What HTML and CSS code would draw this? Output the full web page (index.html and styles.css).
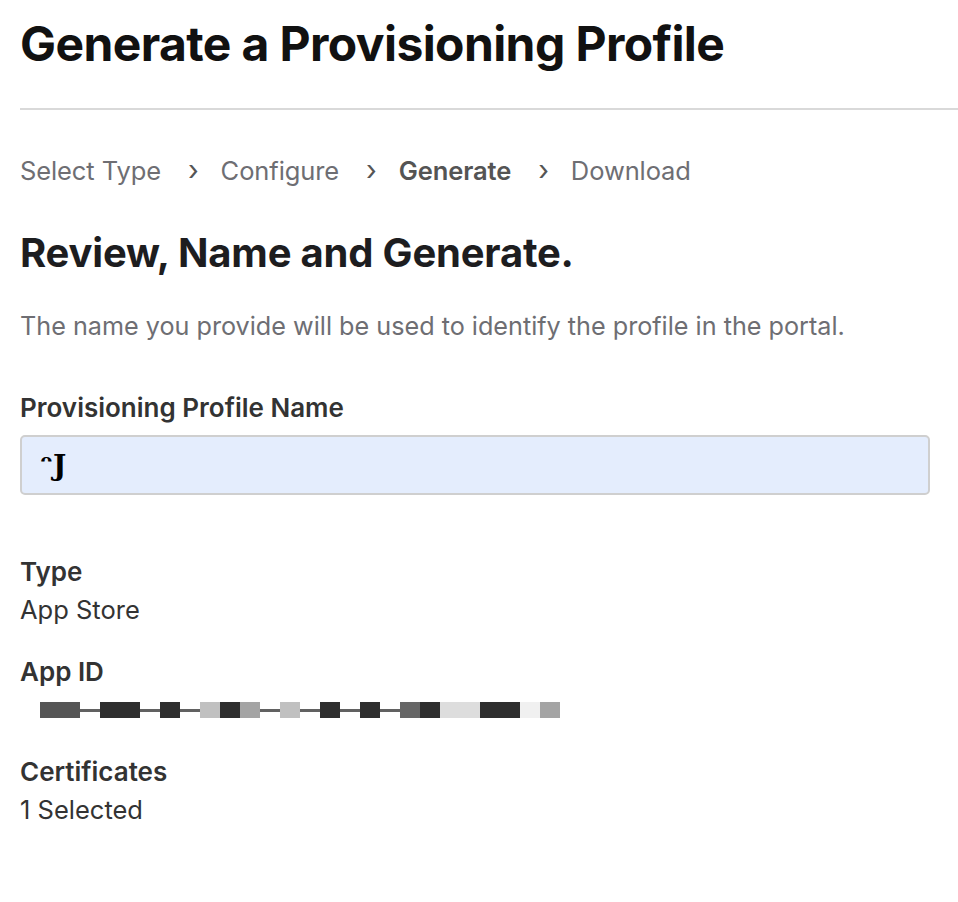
FILE: index.html
```html
<!DOCTYPE html>
<html lang="en">
<head>
<meta charset="utf-8">
<title>Generate a Provisioning Profile</title>
<link rel="stylesheet" href="styles.css">
</head>
<body>
<main class="page">
  <h1 class="title">Generate a Provisioning Profile</h1>
  <hr class="rule">
  <nav class="steps">
    <span class="step">Select Type</span>
    <span class="chev">›</span>
    <span class="step">Configure</span>
    <span class="chev">›</span>
    <span class="step current">Generate</span>
    <span class="chev">›</span>
    <span class="step">Download</span>
  </nav>
  <h2 class="subtitle">Review, Name and Generate.</h2>
  <p class="desc">The name you provide will be used to identify the profile in the portal.</p>
  <label class="label" for="pname">Provisioning Profile Name</label>
  <div class="input" id="pname"><span class="input-text">ᵔJ</span></div>

  <dl class="details">
    <div class="item">
      <dt>Type</dt>
      <dd>App Store</dd>
    </div>
    <div class="item">
      <dt>App ID</dt>
      <dd class="redacted">
        <span class="gap w20"></span><span class="blk w40 c1"></span>
        <span class="ln w20"></span><span class="blk w40 c2"></span>
        <span class="ln w20"></span><span class="blk w20 c2"></span>
        <span class="ln w20"></span><span class="blk w20 c3"></span><span class="blk w20 c2"></span><span class="blk w20 c4"></span>
        <span class="ln w20"></span><span class="blk w20 c3"></span>
        <span class="ln w20"></span><span class="blk w20 c2"></span>
        <span class="ln w20"></span><span class="blk w20 c2"></span>
        <span class="ln w20"></span><span class="blk w20 c5"></span><span class="blk w20 c2"></span><span class="blk w40 c6"></span><span class="blk w40 c2"></span><span class="blk w20 c7"></span><span class="blk w20 c4"></span>
      </dd>
    </div>
    <div class="item">
      <dt>Certificates</dt>
      <dd>1 Selected</dd>
    </div>
  </dl>
</main>
</body>
</html>
```
FILE: styles.css
```css
html, body {
  margin: 0;
  padding: 0;
  background: #ffffff;
}
body {
  font-family: Inter, "Noto Sans", "Liberation Sans", sans-serif;
  color: #1d1d1f;
}
.page {
  padding: 0 0 0 20px;
}
.title {
  margin: 0;
  padding-top: 18px;
  font-size: 48px;
  line-height: 52px;
  font-weight: 700;
  letter-spacing: -0.6px;
  color: #111;
}
.rule {
  border: 0;
  height: 2px;
  background: #d9d9d9;
  margin: 38px 0 0 0;
}
.steps {
  display: flex;
  align-items: center;
  margin-top: 45px;
  height: 30px;
  font-size: 25.5px;
  color: #6e6e73;
  letter-spacing: -0.1px;
}
.chev {
  margin: 0 22px 0 27px;
  font-size: 28px;
  color: #555;
}
.step.current {
  font-weight: 600;
  color: #545454;
}
.subtitle {
  margin: 46px 0 0 0;
  font-size: 40px;
  line-height: 44px;
  font-weight: 700;
  letter-spacing: -0.2px;
  color: #1d1d1f;
}
.desc {
  margin: 36px 0 0 0;
  font-size: 25.2px;
  line-height: 30px;
  color: #6e6e73;
}
.label {
  display: block;
  margin-top: 52px;
  font-size: 26px;
  line-height: 30px;
  font-weight: 600;
  color: #333;
}
.input {
  margin-top: 12px;
  box-sizing: border-box;
  width: 910px;
  height: 60px;
  background: #e4edfd;
  border: 2px solid #cfcfcf;
  border-radius: 5px;
  display: flex;
  align-items: center;
  padding-left: 18px;
}
.input-text {
  font-family: "DejaVu Serif", serif;
  font-size: 28px;
  font-weight: 700;
  color: #000;
}
.details {
  margin: 62px 0 0 0;
}
.item {
  margin-bottom: 32px;
}
.item dt {
  font-size: 26px;
  line-height: 30px;
  font-weight: 600;
  color: #333;
}
.item dd {
  margin: 8px 0 0 0;
  font-size: 25.5px;
  line-height: 30px;
  color: #333;
}
.item dd.redacted {
  display: flex;
  align-items: center;
  height: 30px;
}
.blk {
  display: inline-block;
  height: 16px;
}
.ln {
  display: inline-block;
  height: 3px;
  background: #3a3a3a;
  opacity: 0.8;
}
.gap { display: inline-block; height: 1px; }
.w20 { width: 20px; }
.w40 { width: 40px; }
.c1 { background: #555555; }
.c2 { background: #2e2e2e; }
.c3 { background: #c0c0c0; }
.c4 { background: #a4a4a4; }
.c5 { background: #666666; }
.c6 { background: #dddddd; }
.c7 { background: #f0f0f0; }
```
